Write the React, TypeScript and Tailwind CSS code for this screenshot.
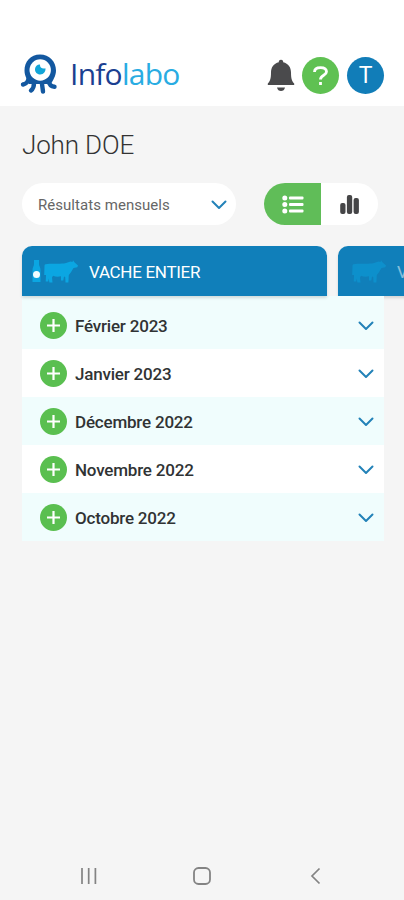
import React from 'react';

const months = ['Février 2023', 'Janvier 2023', 'Décembre 2022', 'Novembre 2022', 'Octobre 2022'];

function Logo() {
  return (
    <svg width="38" height="42" viewBox="0 0 38 42" className="shrink-0">
      <g fill="none" stroke="#1358a0" strokeWidth="4.400" strokeLinecap="round" strokeLinejoin="round">
        <path d="M8.500 26 C8 29 6 30.800 3 31.500" />
        <path d="M14 30 C14 33.500 13 36 11 37.500" />
        <path d="M22 31 L23 38.500" />
        <path d="M28.500 28 C29 31 31 33.500 34.500 33.800" />
      </g>
      <path d="M20 1.500 C29.500 1.500 36 8.500 36 17.500 C36 23 33 27 31 31 L9 31 C8 27 4.500 24 4.500 17.500 C4.500 8.500 10.500 1.500 20 1.500Z" fill="#1358a0" />
      <circle cx="20.200" cy="17" r="10.700" fill="#fff" />
      <path d="M20 11.500 C19.700 14.600 22 16 25.400 15.300 C26 18.500 23.700 21.500 20.300 21.500 C17 21.500 14.800 19 15 16 C15.200 13.200 17.300 11.400 20 11.500Z" fill="#12a5d8" />
    </svg>
  );
}

function Bell() {
  return (
    <svg width="28" height="33" viewBox="0 0 28 33" fill="#4a4a4c">
      <path d="M14 .7 C15.600 .7 16.300 1.700 16.200 3.300 C21.400 4.500 24 8.500 24 13.500 C24 20 25 22.300 27.200 24.600 L27.200 26 L.8 26 L.8 24.600 C3 22.300 4 20 4 13.500 C4 8.500 6.600 4.500 11.800 3.300 C11.700 1.700 12.400 .7 14 .7Z" />
      <path d="M10 28.400 H18 C17.500 30.600 16 32 14 32 C12 32 10.500 30.600 10 28.400Z" />
    </svg>
  );
}

function Chevron() {
  return (
    <svg width="16" height="10" viewBox="0 0 16 10" fill="none" stroke="#2382b8" strokeWidth="2" strokeLinecap="round" strokeLinejoin="round">
      <path d="M1.500 1.500 L8 8 L14.500 1.500" />
    </svg>
  );
}

function Cow() {
  return (
    <svg width="35" height="23" viewBox="0 0 35 23" fill="#0ba6e2">
      <path d="M1.500 4.300 C8 3 16 4.500 22 3 L26.500 1.500 L28.500 2 L29 .2 L30.400 2.200 L34 5.400 L33.300 7.300 L29.500 8 L26.800 12.500 L24.800 15 L24.400 22.500 H21.500 L21.200 17 L20 16.500 L19.300 20.500 H17 L17 16.300 C14 17 11.500 16.800 9 15.800 L8 17.500 L8.500 22.500 H5.400 L4.700 18.500 L4.200 21.500 H1.700 L2 15 L.2 15 L.5 6 C.5 5 .8 4.500 1.500 4.300Z" />
    </svg>
  );
}

function Bottle() {
  return (
    <svg width="9" height="23" viewBox="0 0 9 23">
      <path d="M2 0 H7 V4 C7 6 8.500 7.500 8.500 10 V22 H.5 V10 C.5 7.500 2 6 2 4Z" fill="#0ba6e2" />
      <circle cx="4.500" cy="14.500" r="3.500" fill="#f2fdff" />
    </svg>
  );
}

export default function App() {
  return (
    <div className="flex h-[900px] w-[404px] flex-col overflow-hidden bg-[#f5f5f5] font-['Roboto',sans-serif]">
      <header className="flex h-[106px] shrink-0 items-end bg-white pl-[20px] pr-5 pb-[11px]">
        <Logo />
        <div className="ml-3 h-[42px] font-['Open_Sans',sans-serif] text-[30px] leading-[42px] tracking-[-0.75px] text-[#1b3f91]">
          Info<span className="text-[#29ace2]">labo</span>
        </div>
        <div className="ml-auto flex items-center gap-[7px] pb-px">
          <Bell />
          <div className="flex size-[37px] items-center justify-center rounded-full bg-[#5fc152]">
            <svg width="15" height="20" viewBox="0 0 15 20" fill="none" stroke="#fff" strokeWidth="2.800">
              <path d="M1.500 6 C1.500 3 4 1.600 7.500 1.600 C11.200 1.600 13.500 3.300 13.500 5.800 C13.500 9.500 7.500 9 7.500 13.500" />
              <path d="M7.500 16 V19" />
            </svg>
          </div>
          <div className="ml-px flex size-[37px] items-center justify-center rounded-full bg-[#117db8] pt-0.5 text-[23px] text-white">T</div>
        </div>
      </header>

      <h1 className="ml-[22px] mt-[23px] h-8 text-[26px] font-light leading-8 tracking-[-0.15px] text-[#333]">John DOE</h1>

      <div className="ml-[22px] mt-[22px] flex h-[42px] shrink-0 justify-between pr-[26px]">
        <button className="flex h-full w-[214px] items-center justify-between rounded-full bg-white pl-4 pr-[9px] text-[15px] tracking-[0.04px] text-[#666]">
          <span className="mt-0.5">Résultats mensuels</span>
          <span className="mt-0.5"><Chevron /></span>
        </button>
        <div className="flex h-full w-[114px] overflow-hidden rounded-full bg-white">
          <div className="flex w-[57px] items-center justify-center bg-[#60bd58]">
            <svg width="22" height="19" viewBox="0 0 22 19" fill="#fff">
              <circle cx="2.800" cy="3" r="2.500" /><circle cx="2.800" cy="9.500" r="2.500" /><circle cx="2.800" cy="16" r="2.500" />
              <rect x="7" y="1.400" width="14.500" height="3" rx="1" /><rect x="7" y="8" width="14.500" height="3" rx="1" /><rect x="7" y="14.500" width="14.500" height="3" rx="1" />
            </svg>
          </div>
          <div className="flex w-[57px] items-center justify-center">
            <svg width="19" height="19" viewBox="0 0 19 19" fill="#454547">
              <rect x=".2" y="8" width="5.300" height="11" rx="2" /><rect x="6.900" y="0" width="5.300" height="19" rx="2" /><rect x="13.600" y="3" width="5.300" height="16" rx="2" />
            </svg>
          </div>
        </div>
      </div>

      <div className="ml-[22px] mt-[21px] flex h-[50px] shrink-0 gap-[11px]">
        <div className="z-10 flex w-[305px] shrink-0 items-center rounded-t-[10px] bg-[#107fba] pl-2.5 text-[17px] tracking-[-0.3px] text-white shadow-[0_2px_3px_#0002]">
          <Bottle />
          <div className="ml-[3px]"><Cow /></div>
          <span className="ml-[10px] mt-[3px]">VACHE ENTIER</span>
        </div>
        <div className="flex w-[305px] shrink-0 items-center rounded-t-[10px] bg-[#107fba] pl-[14px] text-[17px] text-white shadow-[0_2px_3px_#0002]">
          <div className="opacity-45"><Cow /></div>
          <span className="ml-[10px] mt-[3px] opacity-50">V</span>
        </div>
      </div>

      <div className="ml-[22px] w-[362px] shrink-0">
        {months.map((month) => (
          <div key={month} className="flex h-12 items-center bg-white pl-[18px] pr-[10px] pt-0.5 first:h-[53px] first:pt-[7px] odd:bg-[#f0fdfd]">
            <div className="mb-0.5 flex size-[27px] items-center justify-center rounded-full bg-[#5abf50]">
              <svg width="13" height="13" viewBox="0 0 13 13" stroke="#fff" strokeWidth="2.200"><path d="M0 6.500 H13 M6.500 0 V13" /></svg>
            </div>
            <span className="ml-2 mt-px text-[17px] font-medium tracking-[-0.2px] text-[#303334]">{month}</span>
            <div className="ml-auto"><Chevron /></div>
          </div>
        ))}
      </div>

      <nav className="mt-auto flex h-12 shrink-0 items-center pl-20">
        <svg width="18" height="18" viewBox="0 0 18 18" stroke="#838383" strokeWidth="1.700"><path d="M2 1 V17 M8.700 1 V17 M15.400 1 V17" /></svg>
        <svg className="ml-[94px]" width="20" height="20" viewBox="0 0 20 20" fill="none" stroke="#838383" strokeWidth="1.800"><rect x="2" y="2" width="16" height="16" rx="4.500" /></svg>
        <svg className="ml-[98px]" width="11" height="18" viewBox="0 0 11 18" fill="none" stroke="#838383" strokeWidth="1.700"><path d="M9.500 1.500 L2 9 L9.500 16.500" /></svg>
      </nav>
    </div>
  );
}
